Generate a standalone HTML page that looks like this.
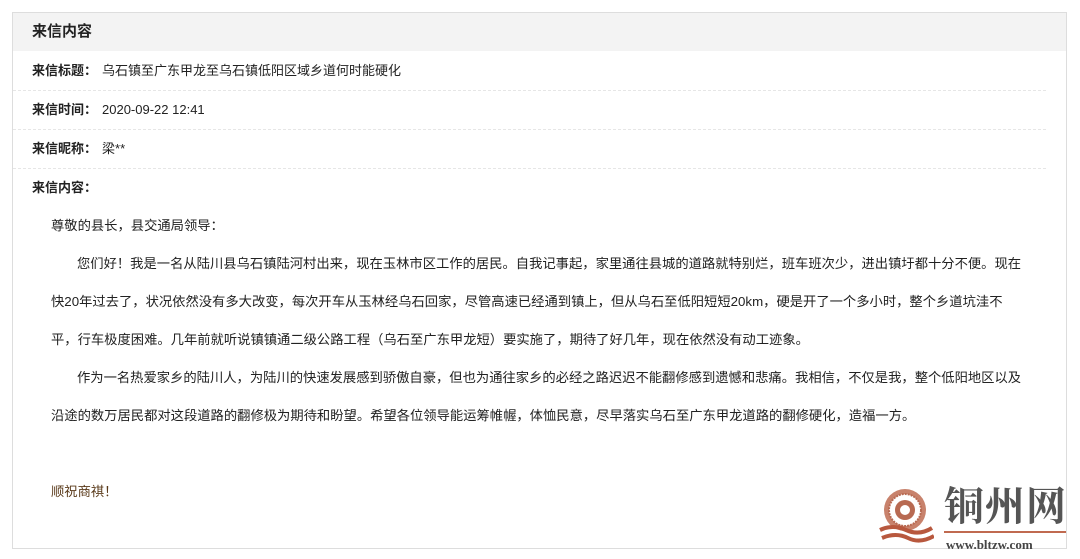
<!DOCTYPE html>
<html><head><meta charset="utf-8"><style>
body{margin:0;width:1080px;height:559px;background:#fff;font-family:"Liberation Sans","Noto Sans CJK SC",sans-serif;color:#222;overflow:hidden;position:relative}
.box{position:absolute;left:12px;top:12px;width:1053px;height:535px;border:1px solid #ddd}
.hd{height:38px;background:#f3f3f3;font-size:15px;font-weight:bold;line-height:38px;padding-left:19px;color:#222}
.row{height:38px;line-height:38px;border-bottom:1px dashed #e6e6e6;font-size:13px;padding-left:19px;margin-right:20px}
.row b{color:#222;margin-right:5px}
.c{font-size:13.3px;padding-left:38px;padding-right:41px;line-height:38px;margin-top:0}
.c p{margin:0}
.i{text-indent:26px}
</style></head><body>
<div class="box">
<div class="hd">来信内容</div>
<div class="row" style="height:39px;line-height:39px"><b>来信标题：</b>乌石镇至广东甲龙至乌石镇低阳区域乡道何时能硬化</div>
<div class="row"><b>来信时间：</b>2020-09-22 12:41</div>
<div class="row"><b>来信昵称：</b>梁**</div>
<div class="row" style="border:none"><b>来信内容：</b></div>
<div class="c">
<p>尊敬的县长，县交通局领导：</p>
<p class="i">您们好！我是一名从陆川县乌石镇陆河村出来，现在玉林市区工作的居民。自我记事起，家里通往县城的道路就特别烂，班车班次少，进出镇圩都十分不便。现在快20年过去了，状况依然没有多大改变，每次开车从玉林经乌石回家，尽管高速已经通到镇上，但从乌石至低阳短短20km，硬是开了一个多小时，整个乡道坑洼不平，行车极度困难。几年前就听说镇镇通二级公路工程（乌石至广东甲龙短）要实施了，期待了好几年，现在依然没有动工迹象。</p>
<p class="i">作为一名热爱家乡的陆川人，为陆川的快速发展感到骄傲自豪，但也为通往家乡的必经之路迟迟不能翻修感到遗憾和悲痛。我相信，不仅是我，整个低阳地区以及沿途的数万居民都对这段道路的翻修极为期待和盼望。希望各位领导能运筹帷幄，体恤民意，尽早落实乌石至广东甲龙道路的翻修硬化，造福一方。</p>
<p>&nbsp;</p>
<p style="color:#5a3a1a">顺祝商祺！</p>
</div>
</div>
<svg style="position:absolute;left:878px;top:486px" width="56" height="60" viewBox="0 0 56 60">
<circle cx="27" cy="24" r="21" fill="#c8826c"/>
<circle cx="27" cy="24" r="16" fill="#fff" stroke="#b86a52" stroke-width="2" stroke-dasharray="2 1"/>
<circle cx="27" cy="24" r="10" fill="#b86a52"/>
<circle cx="27" cy="24" r="5" fill="#fff"/>
<path d="M2 44 Q15 38 28 44 T54 42 M4 52 Q18 46 30 52 T56 50" stroke="#b8583e" stroke-width="4" fill="none"/>
</svg>
<div style="position:absolute;left:944px;top:480px;font-family:'Noto Serif CJK SC',serif;font-size:40px;line-height:48px;color:#555;font-weight:bold;letter-spacing:1px">铜州网</div>
<div style="position:absolute;left:944px;top:531px;width:122px;height:2px;background:#c06a50"></div>
<div style="position:absolute;left:946px;top:537px;font-family:'Liberation Serif',serif;font-size:13px;font-weight:bold;color:#444">www.bltzw.com</div>
</body></html>
